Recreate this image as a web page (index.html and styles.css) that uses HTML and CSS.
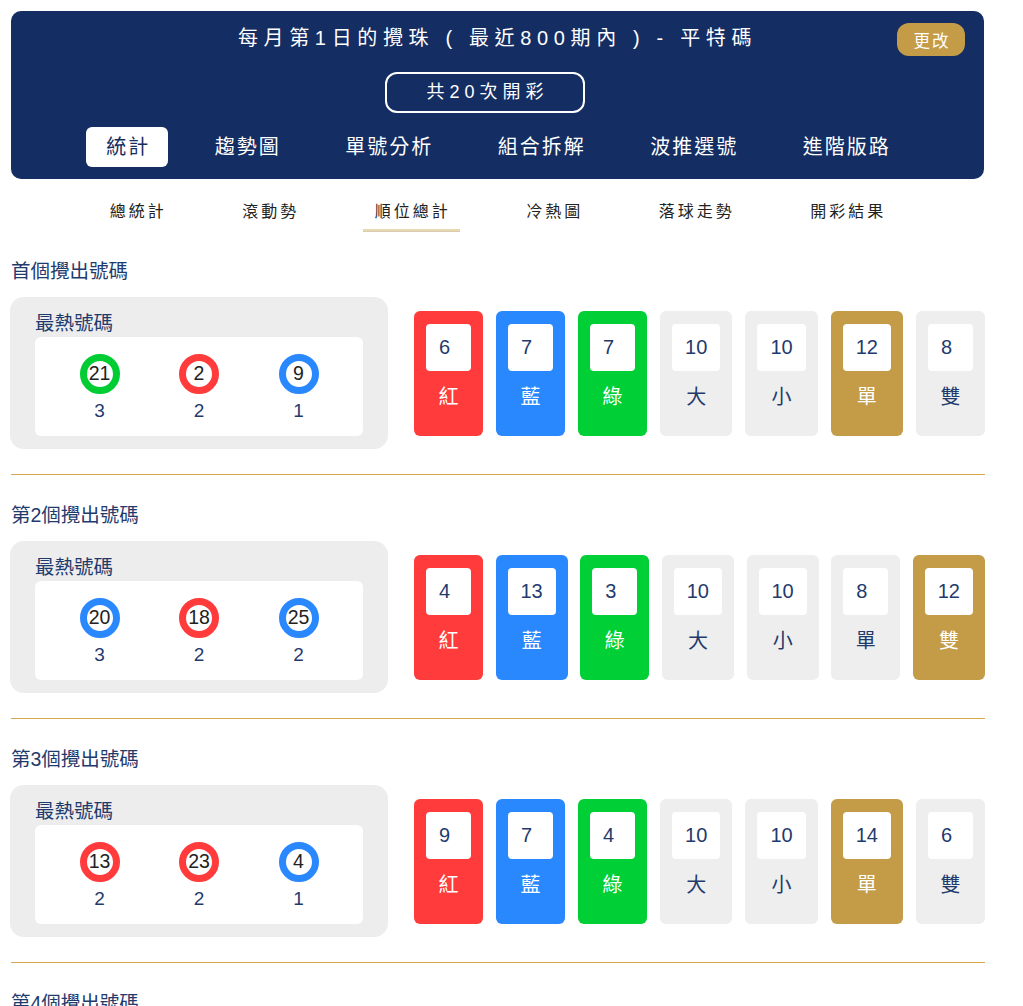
FILE: index.html
```html
<!DOCTYPE html>
<html lang="zh-Hant">
<head>
<meta charset="utf-8">
<title>平特碼 順位總計</title>
<link rel="stylesheet" href="styles.css">
</head>
<body>
<div class="page">
  <header class="hero">
    <h1 class="hero-title">每月第1日的攪珠 ( 最近800期內 ) - 平特碼</h1>
    <button class="change-btn">更改</button>
    <div class="count-row"><div class="count-pill">共20次開彩</div></div>
    <nav class="main-tabs">
      <span class="tab active">統計</span>
      <span class="tab">趨勢圖</span>
      <span class="tab">單號分析</span>
      <span class="tab">組合拆解</span>
      <span class="tab">波推選號</span>
      <span class="tab">進階版路</span>
    </nav>
  </header>

  <nav class="sub-tabs">
    <span class="sub">總統計</span>
    <span class="sub">滾動勢</span>
    <span class="sub active">順位總計</span>
    <span class="sub">冷熱圖</span>
    <span class="sub">落球走勢</span>
    <span class="sub">開彩結果</span>
  </nav>

  <section class="pos">
    <h2 class="pos-title">首個攪出號碼</h2>
    <div class="pos-body">
      <div class="hot">
        <div class="hot-title">最熱號碼</div>
        <div class="hot-list">
          <div class="hot-item"><span class="ball green">21</span><span class="hot-count">3</span></div>
          <div class="hot-item"><span class="ball red">2</span><span class="hot-count">2</span></div>
          <div class="hot-item"><span class="ball blue">9</span><span class="hot-count">1</span></div>
        </div>
      </div>
      <div class="cards">
        <div class="card red"><span class="card-num">6</span><span class="card-label">紅</span></div>
        <div class="card blue"><span class="card-num">7</span><span class="card-label">藍</span></div>
        <div class="card green"><span class="card-num">7</span><span class="card-label">綠</span></div>
        <div class="card grey"><span class="card-num">10</span><span class="card-label">大</span></div>
        <div class="card grey"><span class="card-num">10</span><span class="card-label">小</span></div>
        <div class="card gold"><span class="card-num">12</span><span class="card-label">單</span></div>
        <div class="card grey"><span class="card-num">8</span><span class="card-label">雙</span></div>
      </div>
    </div>
  </section>
  <hr class="sep">

  <section class="pos">
    <h2 class="pos-title">第2個攪出號碼</h2>
    <div class="pos-body">
      <div class="hot">
        <div class="hot-title">最熱號碼</div>
        <div class="hot-list">
          <div class="hot-item"><span class="ball blue">20</span><span class="hot-count">3</span></div>
          <div class="hot-item"><span class="ball red">18</span><span class="hot-count">2</span></div>
          <div class="hot-item"><span class="ball blue">25</span><span class="hot-count">2</span></div>
        </div>
      </div>
      <div class="cards">
        <div class="card red"><span class="card-num">4</span><span class="card-label">紅</span></div>
        <div class="card blue"><span class="card-num">13</span><span class="card-label">藍</span></div>
        <div class="card green"><span class="card-num">3</span><span class="card-label">綠</span></div>
        <div class="card grey"><span class="card-num">10</span><span class="card-label">大</span></div>
        <div class="card grey"><span class="card-num">10</span><span class="card-label">小</span></div>
        <div class="card grey"><span class="card-num">8</span><span class="card-label">單</span></div>
        <div class="card gold"><span class="card-num">12</span><span class="card-label">雙</span></div>
      </div>
    </div>
  </section>
  <hr class="sep">

  <section class="pos">
    <h2 class="pos-title">第3個攪出號碼</h2>
    <div class="pos-body">
      <div class="hot">
        <div class="hot-title">最熱號碼</div>
        <div class="hot-list">
          <div class="hot-item"><span class="ball red">13</span><span class="hot-count">2</span></div>
          <div class="hot-item"><span class="ball red">23</span><span class="hot-count">2</span></div>
          <div class="hot-item"><span class="ball blue">4</span><span class="hot-count">1</span></div>
        </div>
      </div>
      <div class="cards">
        <div class="card red"><span class="card-num">9</span><span class="card-label">紅</span></div>
        <div class="card blue"><span class="card-num">7</span><span class="card-label">藍</span></div>
        <div class="card green"><span class="card-num">4</span><span class="card-label">綠</span></div>
        <div class="card grey"><span class="card-num">10</span><span class="card-label">大</span></div>
        <div class="card grey"><span class="card-num">10</span><span class="card-label">小</span></div>
        <div class="card gold"><span class="card-num">14</span><span class="card-label">單</span></div>
        <div class="card grey"><span class="card-num">6</span><span class="card-label">雙</span></div>
      </div>
    </div>
  </section>
  <hr class="sep">

  <section class="pos">
    <h2 class="pos-title">第4個攪出號碼</h2>
  </section>
</div>
</body>
</html>
```

FILE: styles.css
```css
* { box-sizing: border-box; }

body {
  margin: 0;
  background: #ffffff;
  font-family: "Liberation Sans", "Noto Sans CJK TC", sans-serif;
  color: #1f3b6d;
}

.page {
  width: 974px;
  margin-left: 11px;
  padding-top: 11px;
}

/* ---------- header ---------- */
.hero {
  position: relative;
  width: 973px;
  background: #142d62;
  border-radius: 10px;
  padding: 12px 0 12px;
  color: #ffffff;
}

.hero-title {
  margin: 0;
  font-size: 20px;
  font-weight: normal;
  line-height: 30px;
  letter-spacing: 5.65px;
  text-align: center;
}

.change-btn {
  position: absolute;
  top: 12px;
  right: 19px;
  width: 68px;
  height: 33px;
  border: none;
  border-radius: 12px;
  background: #c49b47;
  color: #ffffff;
  font-family: "Liberation Sans", "Noto Sans CJK TC", sans-serif;
  font-size: 16.5px;
  letter-spacing: 2px;
  padding: 0 0 0 2px;
}

.count-row {
  display: flex;
  justify-content: center;
  padding-right: 25px;
  margin-top: 19px;
}

.count-pill {
  width: 200px;
  height: 41px;
  border: 2px solid #ffffff;
  border-radius: 12px;
  font-size: 18px;
  line-height: 37px;
  letter-spacing: 5px;
  text-align: center;
  padding-left: 5px;
}

.main-tabs {
  display: flex;
  justify-content: center;
  gap: 26.5px;
  margin-top: 14px;
}

.tab {
  height: 40px;
  padding: 0 18px 0 20px;
  font-size: 20px;
  line-height: 40px;
  letter-spacing: 2px;
  border-radius: 6px;
  color: #ffffff;
}

.tab.active {
  background: #ffffff;
  color: #142d62;
}

/* ---------- sub tabs ---------- */
.sub-tabs {
  display: flex;
  justify-content: center;
  gap: 54.5px;
  margin-top: 14px;
  padding-right: 3px;
}

.sub {
  padding: 6px 9px 4px 12px;
  font-size: 16px;
  line-height: 26px;
  letter-spacing: 3px;
  color: #222222;
  border-bottom: 2px solid transparent;
}

.sub.active {
  border-bottom-color: #e8d8b2;
  box-shadow: 0 1px 0 #d9ccb0;
}

/* ---------- sections ---------- */
.pos-title {
  margin: 26px 0 12px;
  font-size: 19.5px;
  font-weight: normal;
  line-height: 28px;
  color: #1f3b6d;
}

.pos-body {
  display: flex;
  align-items: center;
}

.hot {
  width: 378px;
  margin-left: -1px;
  background: #ededed;
  border-radius: 14px;
  padding: 13px 25px;
}

.hot-title {
  font-size: 19.5px;
  line-height: 26px;
  color: #1f3b6d;
  margin-bottom: 1px;
}

.hot-list {
  display: flex;
  justify-content: center;
  background: #ffffff;
  border-radius: 6px;
  padding: 17px 0 12px;
}

.hot-item {
  width: 99.5px;
  display: flex;
  flex-direction: column;
  align-items: center;
}

.ball {
  width: 40px;
  height: 40px;
  border-radius: 50%;
  border: 7px solid;
  background: #ffffff;
  display: flex;
  align-items: center;
  justify-content: center;
  font-size: 19.5px;
  line-height: 1;
  color: #222222;
}

.ball.green { border-color: #00cc33; }
.ball.red { border-color: #ff3b3b; }
.ball.blue { border-color: #2a88ff; }

.hot-count {
  margin-top: 4px;
  font-size: 19px;
  line-height: 26px;
  color: #1f3b6d;
}

.cards {
  flex: 1;
  display: flex;
  justify-content: space-between;
  margin-left: 26px;
}

.card {
  height: 125px;
  border-radius: 6px;
  padding: 13px 12px 0;
  display: flex;
  flex-direction: column;
  align-items: center;
}

.card.red { background: #ff3b3b; color: #ffffff; }
.card.blue { background: #2a88ff; color: #ffffff; }
.card.green { background: #00cf35; color: #ffffff; }
.card.gold { background: #c49b47; color: #ffffff; }
.card.grey { background: #eeeeee; color: #1f3b6d; }

.card-num {
  min-width: 45px;
  height: 47px;
  padding: 0 13px;
  background: #ffffff;
  border-radius: 4px;
  font-size: 20px;
  line-height: 47px;
  color: #1f3b6d;
  text-align: left;
  align-self: stretch;
}

.card-label {
  margin-top: 13px;
  font-size: 20px;
  line-height: 26px;
}

.sep {
  margin: 25px 0 0;
  border: none;
  height: 1px;
  background: #d9a84e;
}
```
